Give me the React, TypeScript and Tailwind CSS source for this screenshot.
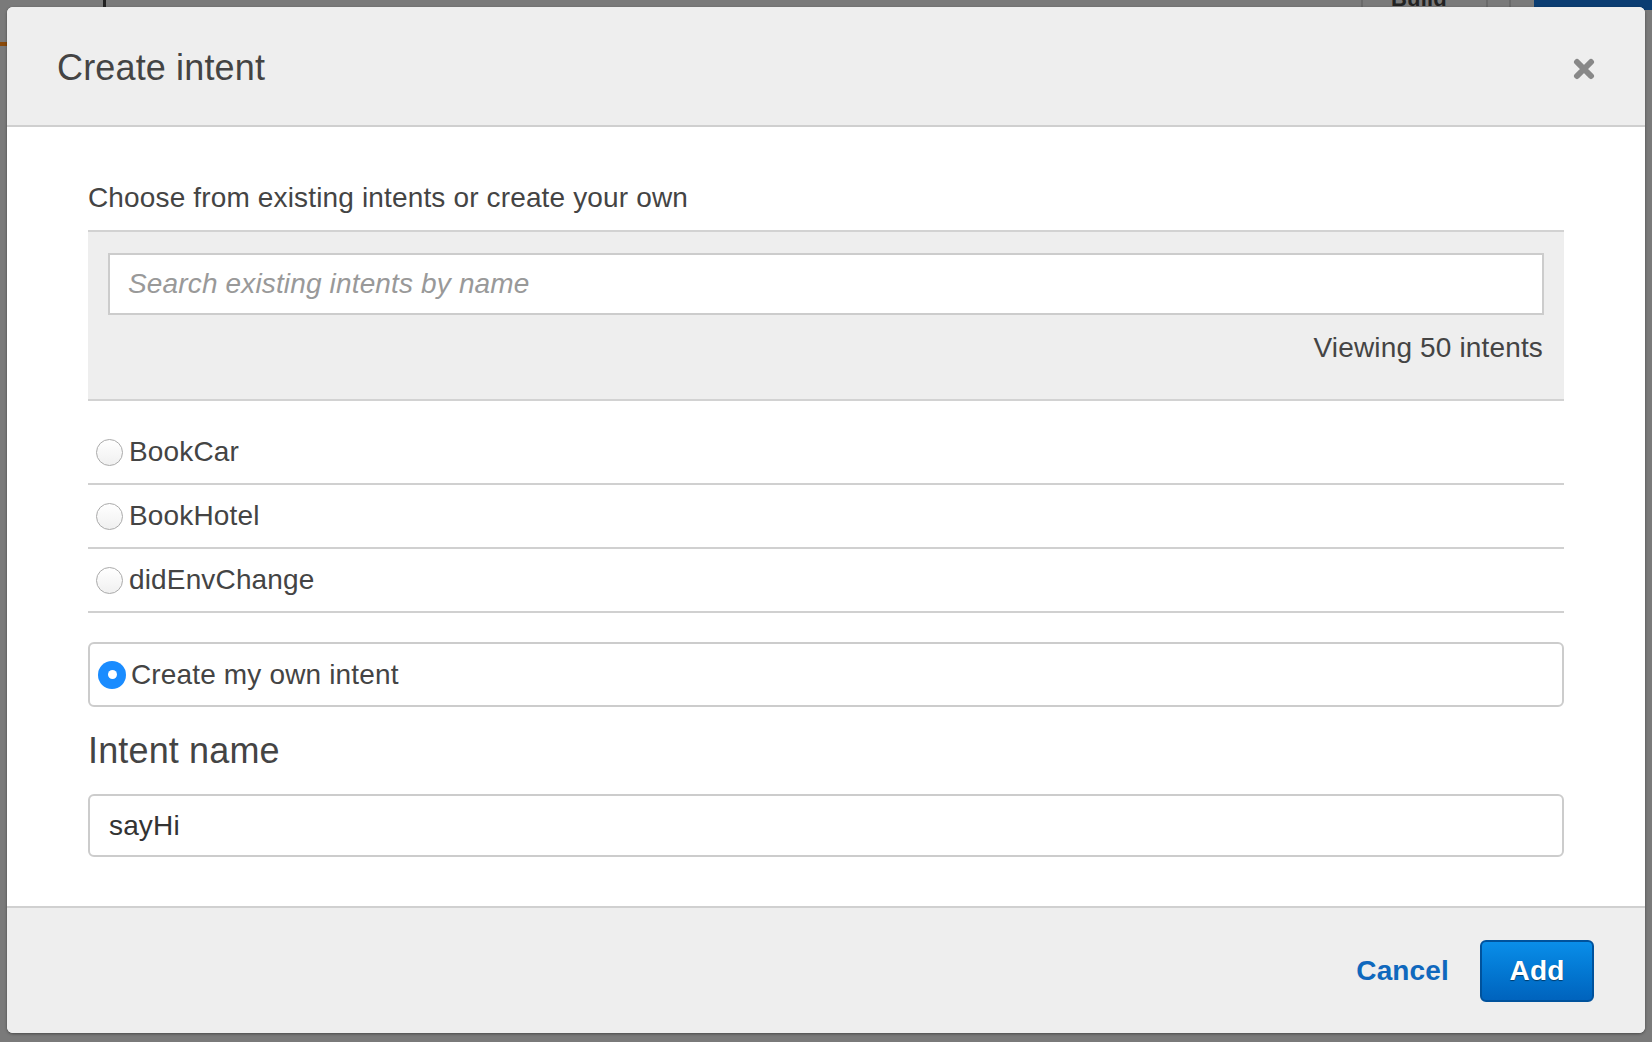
import { useState } from 'react';

/*
  Intent list shown under the search box
*/
const intents = ['BookCar', 'BookHotel', 'didEnvChange'];

function Radio({ checked }: { checked: boolean }) {
  if (checked) {
    return (
      <span className="flex items-center justify-center w-[28px] h-[28px] rounded-full bg-[#1a8cff] shrink-0">
        <span className="w-[9px] h-[9px] rounded-full bg-white" />
      </span>
    );
  }
  return (
    <span className="w-[27px] h-[27px] rounded-full border-[1.5px] border-[#aaaaaa] bg-gradient-to-b from-white to-[#f0f0f0] shrink-0" />
  );
}

export default function App() {
  const [selected, setSelected] = useState<string>('own');
  const [name, setName] = useState('sayHi');

  return (
    <main className="relative w-full h-[1042px] overflow-hidden bg-[#7a7a7a] font-['Liberation_Sans',Arial,sans-serif] text-[#444] tracking-[0.15px]">

      {/* Page behind the backdrop (mostly hidden) */}
      <div className="flex flex-row h-[10px]">
        <div className="w-[1363px] border-r-2 border-[#6a6a6a] flex flex-row">
          <div className="w-[103px]" />
          <div className="w-[3px] h-[7px] bg-[#222]" />
        </div>
        <div className="w-[125px] border-r-2 border-[#6a6a6a] pl-[28px] text-[22px] leading-[10px] font-bold text-[#222] overflow-hidden">
          <span className="relative -top-[6px]">Build</span>
        </div>
        <div className="w-[23px] border-r-2 border-[#6a6a6a]" />
        <div className="w-[23px]" />
        <div className="flex-1 bg-[#0b3d72]" />
      </div>
      <div className="mt-[32px] w-[7px] h-[4px] bg-[#8a4a0a]" />

      {/* Modal */}
      <div className="absolute inset-0 p-[7px]">
        <div className="flex flex-col w-[1638px] h-[1026px] rounded-[6px] bg-white overflow-hidden shadow-[0_1px_3px_rgba(0,0,0,0.4)]">

          {/* Header */}
          <div className="flex flex-row items-center justify-between h-[120px] pl-[50px] pr-[50px] bg-[#eeeeee] border-b-2 border-[#cfcfcf] shrink-0">
            <h1 className="text-[36px] leading-[40px] text-[#444] pt-[3px]">Create intent</h1>
            <button className="w-[22px] h-[22px] mt-[5px] flex items-center justify-center">
              <svg width="22" height="22" viewBox="0 0 22 22">
                <path d="M4 4 L18 18 M18 4 L4 18" stroke="#888" strokeWidth="6" strokeLinecap="round" />
              </svg>
            </button>
          </div>

          {/* Body */}
          <div className="flex flex-col flex-1 px-[81px] pt-[55px]">
            <p className="text-[28px] leading-[32px]">Choose from existing intents or create your own</p>

            {/* Search panel */}
            <div className="mt-[16px] bg-[#eeeeee] border-y-2 border-[#d2d2d2] px-[20px] pt-[21px] pb-[35px]">
              <div className="h-[62px] bg-white border-2 border-[#cccccc] flex items-center pl-[18px]">
                <input
                  className="w-full outline-none text-[28px] italic tracking-[0.15px] placeholder:text-[#999] bg-transparent"
                  placeholder="Search existing intents by name"
                />
              </div>
              <div className="mt-[17px] text-[28px] leading-[32px] text-right pr-[1px]">Viewing 50 intents</div>
            </div>

            {/* Intents */}
            <div className="mt-[20px] flex flex-col">
              {intents.map((item) => (
                <label
                  key={item}
                  className="flex flex-row items-center h-[64px] border-b-2 border-[#d0d0d0] pl-[8px] cursor-pointer"
                  onClick={() => setSelected(item)}
                >
                  <Radio checked={selected === item} />
                  <span className="ml-[6px] text-[28px] leading-[32px]">{item}</span>
                </label>
              ))}
            </div>

            {/* Own intent */}
            <label
              className="mt-[29px] h-[65px] flex flex-row items-center border-2 border-[#cccccc] rounded-[6px] pl-[8px] cursor-pointer"
              onClick={() => setSelected('own')}
            >
              <Radio checked={selected === 'own'} />
              <span className="ml-[5px] text-[28px] leading-[32px]">Create my own intent</span>
            </label>

            <h2 className="mt-[24px] text-[36px] leading-[40px]">Intent name</h2>

            <div className="mt-[23px] h-[63px] border-2 border-[#cccccc] rounded-[6px] flex items-center pl-[19px]">
              <input
                className="w-full outline-none text-[28px] tracking-[0.15px] text-[#333] bg-transparent"
                value={name}
                onChange={(e) => setName(e.target.value)}
              />
            </div>
          </div>

          {/* Footer */}
          <div className="flex flex-row items-center justify-end h-[127px] border-t-2 border-[#d0d0d0] bg-[#eeeeee] pr-[51px] shrink-0">
            <button className="text-[28px] font-bold text-[#0f68bd]">Cancel</button>
            <button className="ml-[31px] w-[114px] h-[62px] rounded-[6px] border-2 border-[#00529c] bg-gradient-to-b from-[#0a8ee9] to-[#0063bd] text-white text-[28px] font-bold [text-shadow:0_1px_1px_rgba(0,0,0,0.5)]">
              Add
            </button>
          </div>

        </div>
      </div>

    </main>
  );
}
